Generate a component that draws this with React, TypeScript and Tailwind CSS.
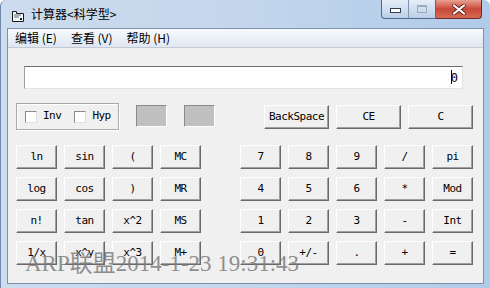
import type { ReactNode } from "react";

const MONO = "font-['DejaVu_Sans_Mono',monospace] text-[11px] tracking-[-0.5px] text-black";
const CJK = "font-['Noto_Sans_CJK_SC','Noto_Sans',sans-serif]";

function Key({ children, className = "" }: { children: ReactNode; className?: string }) {
  return (
    <div
      className={`flex h-[24px] items-center justify-center border border-t-white border-l-white border-r-[#696969] border-b-[#696969] bg-[#f0f0f0] shadow-[inset_-1px_-1px_0_#a0a0a0] ${MONO} ${className}`}
    >
      {children}
    </div>
  );
}

function CheckBox({ label }: { label: string }) {
  return (
    <div className="flex items-center gap-[6px]">
      <div className="h-[12px] w-[12px] border border-t-[#8a8a8a] border-l-[#8a8a8a] border-r-[#e0e0e0] border-b-[#e0e0e0] bg-white" />
      <span className={MONO}>{label}</span>
    </div>
  );
}

function Sunken() {
  return (
    <div className="mt-[2px] h-[22px] w-[31px] border border-t-[#8a8a8a] border-l-[#8a8a8a] border-r-white border-b-white bg-[#c0c0c0]" />
  );
}

const leftKeys = ["ln", "sin", "(", "MC", "log", "cos", ")", "MR", "n!", "tan", "x^2", "MS", "1/x", "x^y", "x^3", "M+"];
const rightKeys = [
  "7", "8", "9", "/", "pi",
  "4", "5", "6", "*", "Mod",
  "1", "2", "3", "-", "Int",
  "0", "+/-", ".", "+", "=",
];

export default function App() {
  return (
    <div className="relative flex h-[288px] w-[490px] flex-col overflow-hidden rounded-t-[6px] border-l border-[#6f88a8] bg-gradient-to-r from-[#cddcee] via-[#c3d6ec] to-[#b0cbe9]">
      {/* title bar */}
      <div className="flex h-[28px] items-start">
        <svg width="12" height="11" viewBox="0 0 12 11" className="ml-[11px] mt-[11px]">
          <path d="M0.5 0.5h4v2h7v8h-11z" fill="#f4f6f8" stroke="#1a1a1a" />
          <path d="M2 4h7M2 6h5" stroke="#5a6b80" />
          <rect x="8" y="7" width="2" height="2" fill="#1a1a1a" />
        </svg>
        <span className={`ml-[7px] mt-[6px] text-[12px] leading-[16px] text-black ${CJK}`}>计算器&lt;科学型&gt;</span>
        <div className="ml-auto mr-[8px] flex h-[19px]">
          <div className="flex w-[55px] overflow-hidden rounded-bl-[4px] border border-t-0 border-[#4f6a8e] bg-gradient-to-b from-[#e6eef8] to-[#bccfe6]">
            <div className="flex w-[27px] items-center justify-center border-r border-[#7f95b3]">
              <div className="mt-[3px] h-[5px] w-[11px] border border-[#2f3f55] bg-white" />
            </div>
            <div className="flex flex-1 items-center justify-center">
              <div className="h-[8px] w-[10px] border border-[#9aabbf] border-t-2" />
            </div>
          </div>
          <div className="flex w-[46px] items-center justify-center rounded-br-[4px] border border-t-0 border-l-0 border-[#6b2a25] bg-gradient-to-b from-[#e8a090] via-[#c9473a] to-[#d56a55]">
            <svg width="14" height="11" viewBox="0 0 14 11">
              <path d="M2 1.5l10 8M12 1.5l-10 8" stroke="#5a1d18" strokeWidth="3.6" strokeLinecap="round" />
              <path d="M2 1.5l10 8M12 1.5l-10 8" stroke="#ffffff" strokeWidth="2.2" strokeLinecap="round" />
            </svg>
          </div>
        </div>
      </div>

      {/* client area */}
      <div className="mx-[6px] mb-[4px] flex flex-1 flex-col border border-[#7d91ad] bg-[#f0f0f0]">
        {/* menu bar */}
        <div className={`flex h-[19px] items-center gap-[14px] border-b border-[#c3cad5] bg-gradient-to-b from-[#f8fafd] to-[#dfe7f2] pl-[7px] text-[12px] text-black ${CJK}`}>
          <span>编辑 (E)</span>
          <span>查看 (V)</span>
          <span>帮助 (H)</span>
        </div>

        {/* display */}
        <div className="relative ml-[16px] mt-[18px] flex h-[23px] w-[439px] items-center justify-end border border-t-[#6d6d6d] border-l-[#a0a0a0] border-r-[#e3e3e3] border-b-[#e3e3e3] bg-white pr-[4px]">
          <span className="relative font-['DejaVu_Sans_Mono',monospace] text-[12px] text-black">
            0
            <span className="absolute left-0 top-[1px] h-[14px] w-[1px] bg-black" />
          </span>
        </div>

        {/* options row */}
        <div className="mt-[14px] flex h-[27px] items-start">
          <div className="ml-[8px] flex h-[27px] w-[103px] items-center gap-[13px] border border-[#a8a8a8] pl-[8px] shadow-[inset_1px_1px_0_#fff,1px_1px_0_#fff]">
            <CheckBox label="Inv" />
            <CheckBox label="Hyp" />
          </div>
          <div className="ml-[17px]">
            <Sunken />
          </div>
          <div className="ml-[17px]">
            <Sunken />
          </div>
          <div className="ml-[49px] mt-[2px] flex gap-[7px]">
            <Key className="w-[65px]">BackSpace</Key>
            <Key className="w-[65px]">CE</Key>
            <Key className="w-[65px]">C</Key>
          </div>
        </div>

        {/* keypad */}
        <div className="mt-[15px] flex items-start">
          <div className="ml-[8px] grid grid-cols-[repeat(4,41px)] gap-x-[7px] gap-y-[8px]">
            {leftKeys.map((k) => (
              <Key key={k}>{k}</Key>
            ))}
          </div>
          <div className="ml-[39px] grid grid-cols-[repeat(5,41px)] gap-x-[7px] gap-y-[8px]">
            {rightKeys.map((k) => (
              <Key key={k}>{k}</Key>
            ))}
          </div>
        </div>
      </div>

      {/* watermark */}
      <div className="pointer-events-none absolute left-[24px] top-[252px] whitespace-nowrap font-['Liberation_Serif','Noto_Sans_CJK_SC',serif] text-[23px] leading-[24px] text-[#7c7c7c]/85">
        ARP联盟2014-1-23 19:31:43
      </div>
    </div>
  );
}
